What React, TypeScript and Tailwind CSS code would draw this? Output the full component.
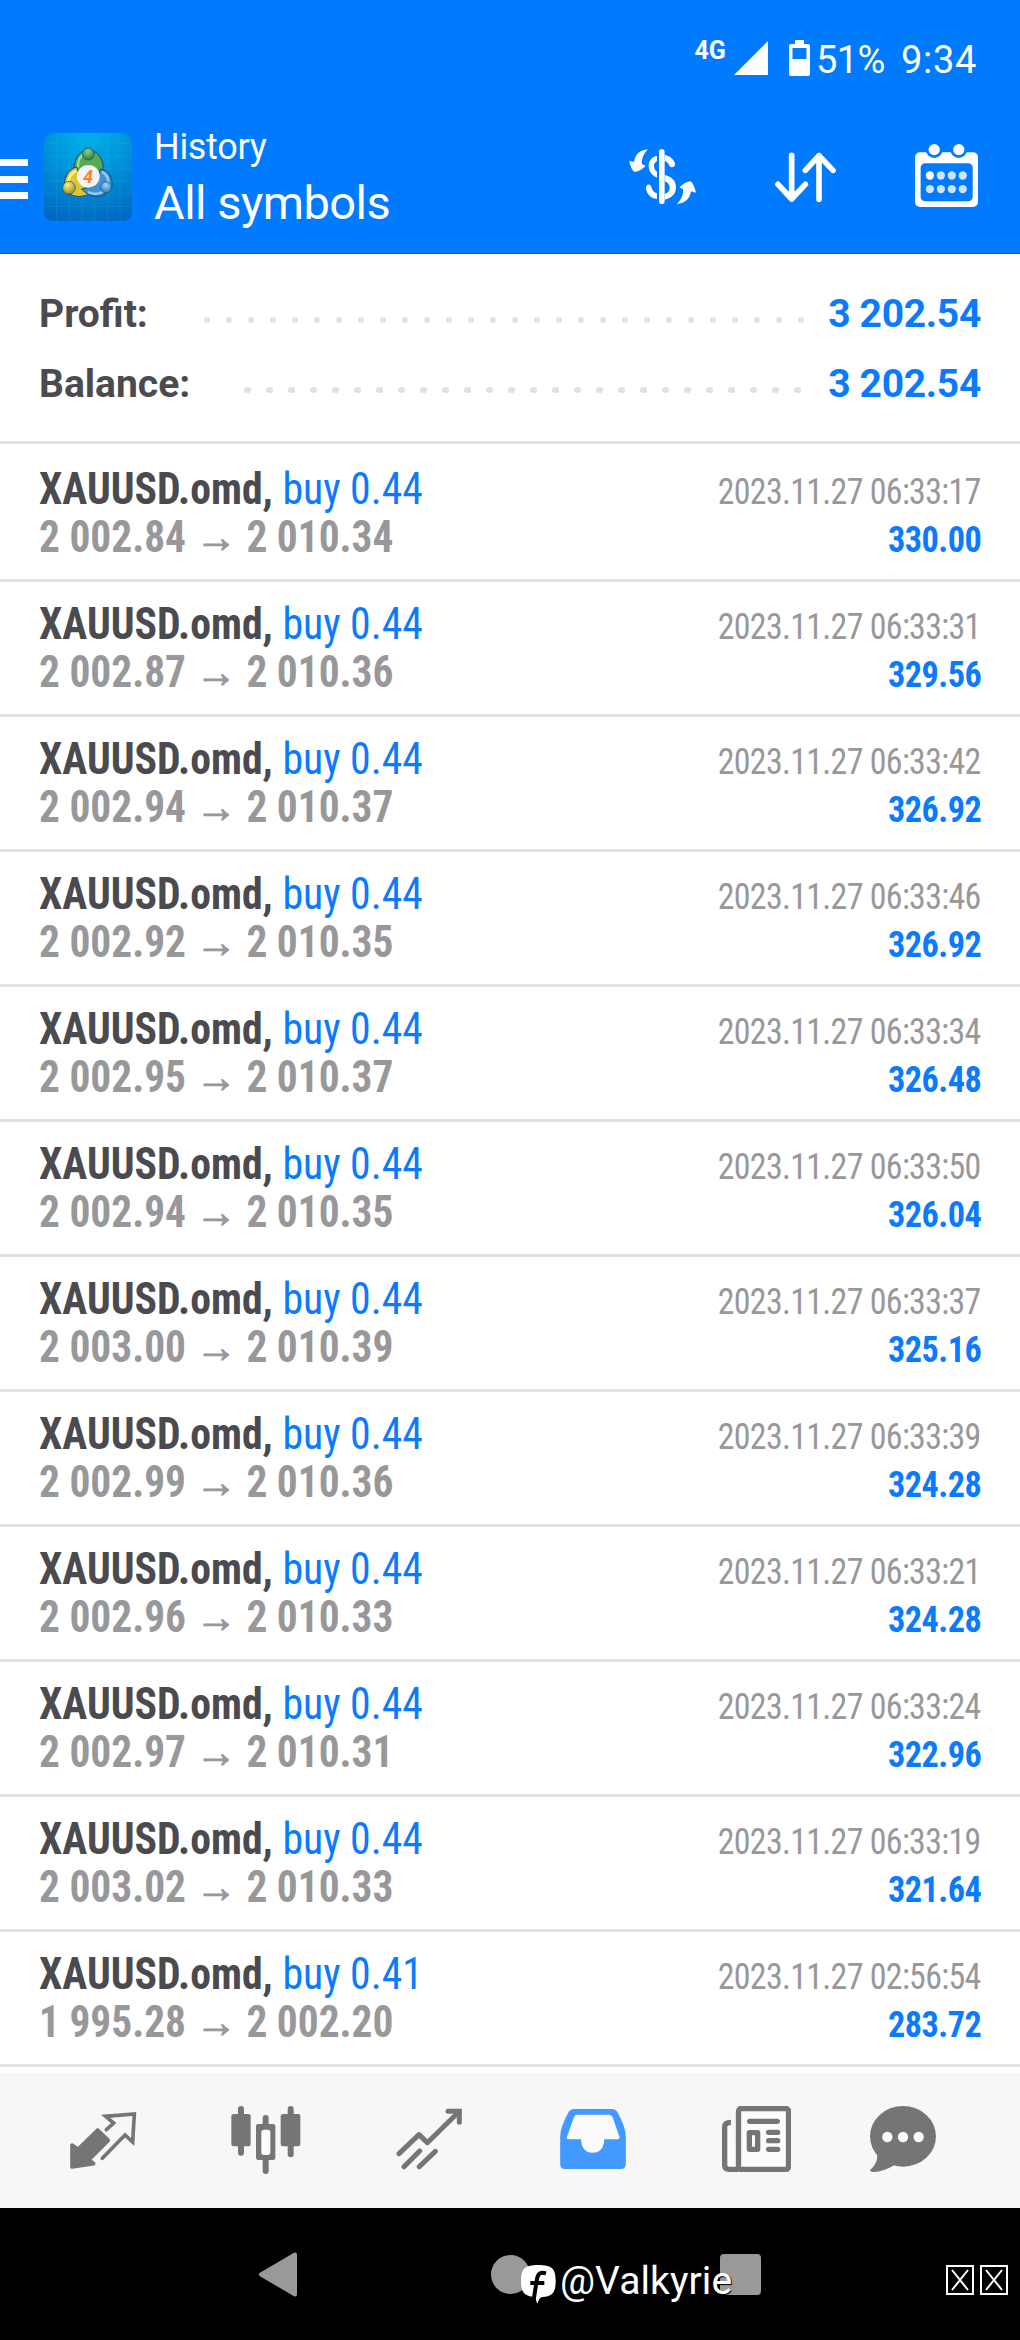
import React from 'react';

interface Deal {
  volume: string;
  open: string;
  close: string;
  time: string;
  profit: string;
}

const deals: Deal[] = [
  { volume: '0.44', open: '2 002.84', close: '2 010.34', time: '2023.11.27 06:33:17', profit: '330.00' },
  { volume: '0.44', open: '2 002.87', close: '2 010.36', time: '2023.11.27 06:33:31', profit: '329.56' },
  { volume: '0.44', open: '2 002.94', close: '2 010.37', time: '2023.11.27 06:33:42', profit: '326.92' },
  { volume: '0.44', open: '2 002.92', close: '2 010.35', time: '2023.11.27 06:33:46', profit: '326.92' },
  { volume: '0.44', open: '2 002.95', close: '2 010.37', time: '2023.11.27 06:33:34', profit: '326.48' },
  { volume: '0.44', open: '2 002.94', close: '2 010.35', time: '2023.11.27 06:33:50', profit: '326.04' },
  { volume: '0.44', open: '2 003.00', close: '2 010.39', time: '2023.11.27 06:33:37', profit: '325.16' },
  { volume: '0.44', open: '2 002.99', close: '2 010.36', time: '2023.11.27 06:33:39', profit: '324.28' },
  { volume: '0.44', open: '2 002.96', close: '2 010.33', time: '2023.11.27 06:33:21', profit: '324.28' },
  { volume: '0.44', open: '2 002.97', close: '2 010.31', time: '2023.11.27 06:33:24', profit: '322.96' },
  { volume: '0.44', open: '2 003.02', close: '2 010.33', time: '2023.11.27 06:33:19', profit: '321.64' },
  { volume: '0.41', open: '1 995.28', close: '2 002.20', time: '2023.11.27 02:56:54', profit: '283.72' },
];

const StatusBar: React.FC = () => (
  <div className="flex h-[95px] items-start justify-end pr-[43px] text-white">
    <span className="mt-[35px] mr-[8px] text-[25px] leading-8 font-bold">4G</span>
    <svg className="mt-[41px] mr-[21px] h-[34px] w-[34px]" viewBox="0 0 34 34" fill="currentColor">
      <path d="M34 0v34H0z" />
    </svg>
    <svg className="mt-[40px] mr-[6px] h-9 w-[21px]" viewBox="0 0 21 36" fill="currentColor">
      <path fillRule="evenodd" d="M6 0h9v4h4a2 2 0 0 1 2 2v28a2 2 0 0 1-2 2H2a2 2 0 0 1-2-2V6a2 2 0 0 1 2-2h4zM3.500 8v11h14V8z" />
    </svg>
    <span className="mt-[35px] mr-[16px] text-[38px] leading-[50px] tracking-[-0.5px]">51%</span>
    <span className="mt-[35px] text-[38px] leading-[50px] tracking-[0.7px]">9:34</span>
  </div>
);

const AppLogo: React.FC = () => (
  <svg className="h-[88px] w-[88px] shrink-0" viewBox="42 40 264 264">
    <defs>
      <radialGradient id="tile" cx=".5" cy="0" r="1.050">
        <stop offset="0" stopColor="#00b2ec" />
        <stop offset=".5" stopColor="#0090d8" />
        <stop offset="1" stopColor="#0068c0" />
      </radialGradient>
      <radialGradient id="green" cx=".45" cy=".3" r=".7">
        <stop offset="0" stopColor="#8fca8c" />
        <stop offset="1" stopColor="#24803a" />
      </radialGradient>
      <radialGradient id="gold" cx=".4" cy=".3" r=".7">
        <stop offset="0" stopColor="#f5ef8e" />
        <stop offset="1" stopColor="#a8921a" />
      </radialGradient>
      <radialGradient id="sky" cx=".5" cy=".3" r=".7">
        <stop offset="0" stopColor="#9ad4f7" />
        <stop offset="1" stopColor="#2676bf" />
      </radialGradient>
    </defs>
    <rect x="42" y="40" width="264" height="264" rx="26" fill="url(#tile)" />
    <path d="M80 40v264M118 40v264M156 40v264M194 40v264M232 40v264M270 40v264M42 72h264M42 110h264M42 148h264M42 184h264M42 222h264M42 260h264" stroke="#45cdf0" strokeOpacity=".14" strokeWidth="3" />
    <g stroke="#1a4a5e" strokeWidth="3">
      <path d="M134 172C126 130 142 94 175 90c34 4 52 38 42 78l-22-14-20-18-22 22z" fill="#54aa55" />
      <path d="M140 142c-28 8-38 34-38 66 20 26 56 30 88 8l-34-30z" fill="#dcc733" />
      <path d="M212 148c28 6 38 30 33 56-22 32-62 36-90 4l36-8z" fill="#3f92d6" />
    </g>
    <g fill="none" strokeWidth="7" strokeLinecap="round">
      <path d="M144 140c0-26 14-40 30-40" stroke="#9fdb91" />
      <path d="M136 154c-14 8-20 22-22 36" stroke="#fff68d" />
      <path d="M176 218c22 10 46 0 56-12M218 158c10 6 16 16 17 28" stroke="#93cef2" />
    </g>
    <g stroke="#1d5260" strokeWidth="2">
      <circle cx="175" cy="103" r="18" fill="url(#green)" />
      <circle cx="117" cy="204" r="19" fill="url(#gold)" />
      <circle cx="228" cy="203" r="17" fill="url(#sky)" />
    </g>
    <circle cx="175" cy="170" r="34" fill="#f6f5f4" />
    <text x="174" y="189" textAnchor="middle" fontSize="54" fontWeight="700" fontStyle="italic" fill="#f58233">4</text>
  </svg>
);

const TradeIcon: React.FC = () => (
  <svg className="mt-[53px] h-[58px] w-[68px]" viewBox="24 24 204 174" fill="currentColor">
    <rect x="117" y="28" width="17" height="164" rx="7" />
    <path d="M111 47c-15 3-25 15-25 31 0 16 10 29 25 35V95c-7-4-9-11-9-17 0-7 3-11 9-14z" />
    <path d="M134 45c14 2 26 11 31 25 2 12-13 17-18 5-3-6-7-10-13-12z" />
    <path d="M134 105c22 6 34 17 34 37 0 21-15 33-34 37v-17c9-3 15-10 15-19 0-10-6-15-15-19z" />
    <path d="M94 140c2 10 8 17 17 20v17c-18-2-30-14-33-30-2-14 12-18 16-7z" />
    <path id="swap" d="M84 28C60 30 46 42 42 66L28 62Q27 66 32 78Q37 94 45 96Q60 94 77 78L66 72C64 56 72 40 84 28Z" />
    <use href="#swap" transform="rotate(180 127.5 110)" />
  </svg>
);

const SortIcon: React.FC = () => (
  <svg className="mt-[57px] ml-[79px] h-[51px] w-[61px]" viewBox="524 455 183 153" fill="none" stroke="currentColor" strokeWidth="17" strokeLinecap="round" strokeLinejoin="round">
    <path d="M574 465v130M533 552l41 44 41-44M656 597V466M615 510l41-44 42 44" />
  </svg>
);

const CalendarIcon: React.FC = () => (
  <svg className="mt-[49px] mr-[42px] ml-[79px] h-[63px] w-[63px]" viewBox="945 432 190 190" fill="currentColor">
    <rect x="945" y="457" width="190" height="165" rx="15" />
    <rect x="962" y="490" width="157" height="115" rx="14" fill="#007aff" />
    <circle cx="1003" cy="449" r="25" fill="#007aff" />
    <circle cx="1077" cy="449" r="25" fill="#007aff" />
    <circle cx="1003" cy="449" r="17" />
    <circle cx="1077" cy="449" r="17" />
    <circle cx="990" cy="527" r="12.500" />
    <g opacity=".8">
      <circle cx="1023" cy="527" r="12.500" />
      <circle cx="1056" cy="527" r="12.500" />
      <circle cx="1089" cy="527" r="12.500" />
      <circle cx="990" cy="568" r="12.500" />
      <circle cx="1023" cy="568" r="12.500" />
      <circle cx="1056" cy="568" r="12.500" />
      <circle cx="1089" cy="568" r="12.500" />
    </g>
  </svg>
);

const Header: React.FC = () => (
  <header className="h-[254px] border-b border-[#0a62c4] bg-[#007aff]">
    <StatusBar />
    <div className="flex items-start text-white">
      <div className="mt-[64px] flex w-7 flex-col gap-[9.5px]">
        <span className="h-[7px] bg-white" />
        <span className="h-[7px] bg-white" />
        <span className="h-[7px] bg-white" />
      </div>
      <div className="mt-[38px] ml-4">
        <AppLogo />
      </div>
      <div className="mt-[31px] ml-[22px] flex-1">
        <div className="text-[36px] leading-[42px] tracking-[-0.3px]">History</div>
        <div className="mt-[7px] text-[47px] leading-[56px] tracking-[-0.5px]">All symbols</div>
      </div>
      <TradeIcon />
      <SortIcon />
      <CalendarIcon />
    </div>
  </header>
);

const SummaryRow: React.FC<{ label: string; value: string; dots: number; className: string }> = ({ label, value, dots, className }) => (
  <div className="flex items-center">
    <span className="text-[#4a4a4f]">{label}</span>
    {/* Dotted leader */}
    <div className={`flex flex-1 justify-end gap-[15.5px] pt-[12px] ${className}`}>
      {Array.from({ length: dots }, (_, i) => (
        <span key={i} className="h-[6.5px] w-[6.5px] shrink-0 rounded-full bg-[#e1e1e4]" />
      ))}
    </div>
    <span className="w-[154px] text-right tracking-[-0.3px] whitespace-nowrap text-[#0a7aff]">{value}</span>
  </div>
);

const Summary: React.FC = () => (
  <section className="flex h-[190px] flex-col border-b-3 border-[#e2e2e3] px-[39px] pt-[25px] text-[39px] leading-[70px] font-bold">
    <SummaryRow label="Profit:" value="3 202.54" dots={28} className="pr-[23px]" />
    <SummaryRow label="Balance:" value="3 202.54" dots={26} className="pr-[26.5px]" />
  </section>
);

const DealRow: React.FC<{ deal: Deal }> = ({ deal }) => (
  <div className="flex h-[135px] justify-between border-b-3 border-[#e2e2e3] px-[39px] pt-[18px] whitespace-nowrap [font-stretch:condensed]">
    <div className="flex flex-col items-start text-[44px] leading-[48px] font-bold">
      <span className="origin-left scale-x-[0.948] text-[#4a4a4f]">
        XAUUSD.omd, <span className="font-normal text-[#0a7aff]">buy {deal.volume}</span>
      </span>
      <span className="origin-left scale-x-[0.94] text-[#98989b]">
        {deal.open} <span className="[-webkit-text-stroke:1px_#98989b]">→</span> {deal.close}
      </span>
    </div>
    <div className="flex flex-col items-end pt-[3px] text-[36px] leading-[48px]">
      <span className="origin-right scale-x-[0.94] tracking-[-0.7px] text-[#98989b]">{deal.time}</span>
      <span className="origin-right scale-x-[0.95] font-bold tracking-[-0.5px] text-[#0a7aff]">{deal.profit}</span>
    </div>
  </div>
);

const TabBar: React.FC = () => (
  <nav className="flex h-[135px] items-start bg-[#f7f7f7] pl-[70px] text-[#757575]">
    {/* Quotes */}
    <svg className="mt-[38px] h-[59px] w-[67px]" viewBox="210 153 201 177" fill="none" stroke="currentColor" strokeWidth="11" strokeLinecap="round">
      <path d="M293 210l32 31-58 58 14 12-65 10v-66l18 13z" fill="currentColor" strokeLinejoin="round" />
      <path d="M319 209l22-20-24-20 86-7-5 84-23-21-68 70" />
    </svg>
    {/* Charts */}
    <svg className="mt-[33px] ml-[94px] h-[69px] w-[70px]" viewBox="694 138 210 207" fill="currentColor">
      <rect x="715" y="138" width="18" height="149" rx="9" />
      <rect x="695" y="162" width="58" height="97" rx="7" />
      <rect x="789" y="165" width="18" height="177" rx="9" />
      <rect x="769" y="192" width="58" height="108" rx="7" />
      <rect x="785" y="209" width="27" height="76" rx="8" fill="#fcfcfc" />
      <rect x="864" y="138" width="18" height="154" rx="9" />
      <rect x="843" y="162" width="59" height="97" rx="7" />
    </svg>
    {/* Trade */}
    <svg className="mt-[35px] ml-[95px] h-[62px] w-[67px]" viewBox="1188 144 201 186" fill="none" stroke="currentColor" strokeWidth="15" strokeLinecap="round" strokeLinejoin="round">
      <path d="M1197 281l60-57 25 24 94-92" />
      <path d="M1344 154h34v33" strokeLinejoin="miter" />
      <path d="M1212 320l47-47M1258 320l48-46" />
    </svg>
    {/* History */}
    <svg className="mt-[36px] ml-[97px] h-[60px] w-[66px]" viewBox="149 146 198 181">
      <path d="M190 146H306q10 0 15 8q26 46 26 76v82q0 15-15 15H163q-14 0-14-15v-82q0-30 26-76q5-8 15-8z" fill="#4299ff" />
      <path d="M200 163h96q8 0 11 7l20 58q3 9-6 9h-39c0 25-14 41-35 41s-35-16-35-41h-38q-7 0-4-9l21-58q3-7 9-7z" fill="#fcfcfc" />
    </svg>
    {/* News */}
    <svg className="mt-[33px] ml-[96px] h-[66px] w-[69px]" viewBox="635 138 207 198" fill="none" stroke="currentColor" strokeWidth="16" strokeLinecap="round">
      <path d="M662 187q-19 0-19 14v115q0 12 13 12h28" fill="#fcfcfc" strokeLinecap="butt" />
      <rect x="684.500" y="145.500" width="150" height="183" rx="8" fill="#fcfcfc" />
      <path d="M718 184h83M775 217h27M775 242h27M775 268h27" />
      <rect x="717" y="218" width="25" height="50" rx="1" />
    </svg>
    {/* Messages */}
    <svg className="mt-[33px] ml-[79px] h-[66px] w-[66px]" viewBox="1080 138 198 198" fill="currentColor">
      <ellipse cx="1179" cy="229" rx="99" ry="91" />
      <path d="M1100 275q8 30-19 54-2 6 8 7 34-2 66-22z" />
      <circle cx="1132" cy="231" r="15.500" fill="#fcfcfc" />
      <circle cx="1179" cy="231" r="15.500" fill="#fcfcfc" />
      <circle cx="1226" cy="231" r="15.500" fill="#fcfcfc" />
    </svg>
  </nav>
);

const MissingGlyph: React.FC = () => (
  <svg className="h-[30px] w-7" viewBox="0 0 28 30" fill="none" stroke="#fff" strokeWidth="2">
    <path d="M1 1h26v28H1zM6 5l16 20M22 5L6 25" />
  </svg>
);

const SystemNav: React.FC = () => (
  <div className="relative flex h-[132px] items-start bg-black pl-[258px] text-[#999999]">
    <svg className="mt-[44px] h-[45px] w-[40px]" viewBox="0 0 40 45" fill="currentColor" stroke="currentColor" strokeWidth="4" strokeLinejoin="round">
      <path d="M3 22.500L37 2.500v40z" />
    </svg>
    <span className="mt-[47px] ml-[193px] h-[39px] w-[39px] rounded-full bg-[#999999]" />
    <span className="mt-[46px] ml-[190px] h-[41px] w-[41px] rounded-[4px] bg-[#999999]" />

    {/* Watermark over the navigation buttons */}
    <div className="absolute top-[57px] right-[12px] left-[521px] flex items-start text-white">
      <svg className="h-[39px] w-[35px]" viewBox="32 30 105 117">
        <path d="M84 30c40 0 52 10 52 48 0 36-10 46-40 48-8 2-12 10-14 20-4-4-6-12-5-20C42 124 32 114 32 78c0-38 12-48 52-48z" fill="#fff" />
        <path d="M107 55c-18-5-24 2-27 17l-9 56M60 84h42" fill="none" stroke="#000" strokeWidth="12" />
      </svg>
      <span className="-mt-[9px] ml-[4px] text-[39px] leading-[50px] tracking-[0.1px] [text-shadow:1px_1px_1px_#000]">@Valkyrie</span>
      <div className="ml-auto flex gap-[6px]">
        <MissingGlyph />
        <MissingGlyph />
      </div>
    </div>
  </div>
);

export default function App() {
  return (
    <div className="flex h-[2340px] w-[1020px] flex-col overflow-hidden bg-white font-[Roboto,'Liberation_Sans',sans-serif]">
      <Header />
      <Summary />
      <main className="flex-1 pt-[3px]">
        {deals.map((deal) => <DealRow key={deal.time} deal={deal} />)}
      </main>
      <footer>
        <TabBar />
        <SystemNav />
      </footer>
    </div>
  );
}
